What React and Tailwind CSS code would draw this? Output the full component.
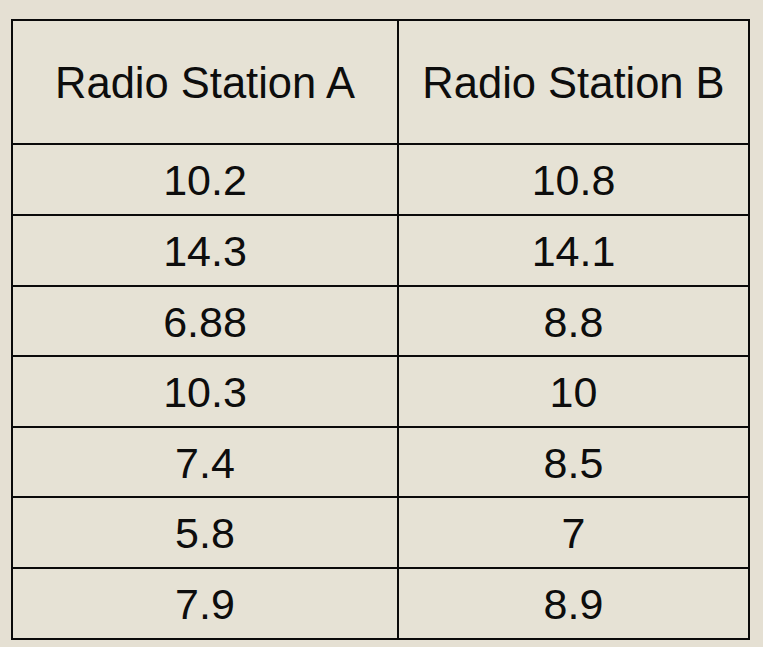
import React from "react";

const rows = [
  ["10.2", "10.8", "h-[71px]"],
  ["14.3", "14.1", "h-[71px]"],
  ["6.88", "8.8", "h-[70px]"],
  ["10.3", "10", "h-[71px]"],
  ["7.4", "8.5", "h-[70px]"],
  ["5.8", "7", "h-[71px]"],
  ["7.9", "8.9", "h-[71px]"],
];

export default function App() {
  return (
    <div
      className="w-[763px] h-[647px] bg-[#e5e0d3] pt-[19px] pl-[11px] text-[#0d0d0d]"
      style={{ fontFamily: '"Liberation Sans", Arial, sans-serif' }}
    >
      <div className="w-[739px] border-2 border-[#0a0a0a] bg-[#e6e2d5]">
        <div className="flex h-[122px]">
          <div className="w-[386px] border-r-2 border-[#0a0a0a] flex items-center justify-center text-[43.5px] pt-[4px]">
            Radio Station A
          </div>
          <div className="flex-1 flex items-center justify-center text-[43.5px] pt-[4px]">
            Radio Station B
          </div>
        </div>
        {rows.map(([a, b, h], i) => (
          <div key={i} className={`flex border-t-2 border-[#0a0a0a] ${h}`}>
            <div className="w-[386px] border-r-2 border-[#0a0a0a] flex items-center justify-center text-[43px] pt-[2px]">
              {a}
            </div>
            <div className="flex-1 flex items-center justify-center text-[43px] pt-[2px]">
              {b}
            </div>
          </div>
        ))}
      </div>
    </div>
  );
}
